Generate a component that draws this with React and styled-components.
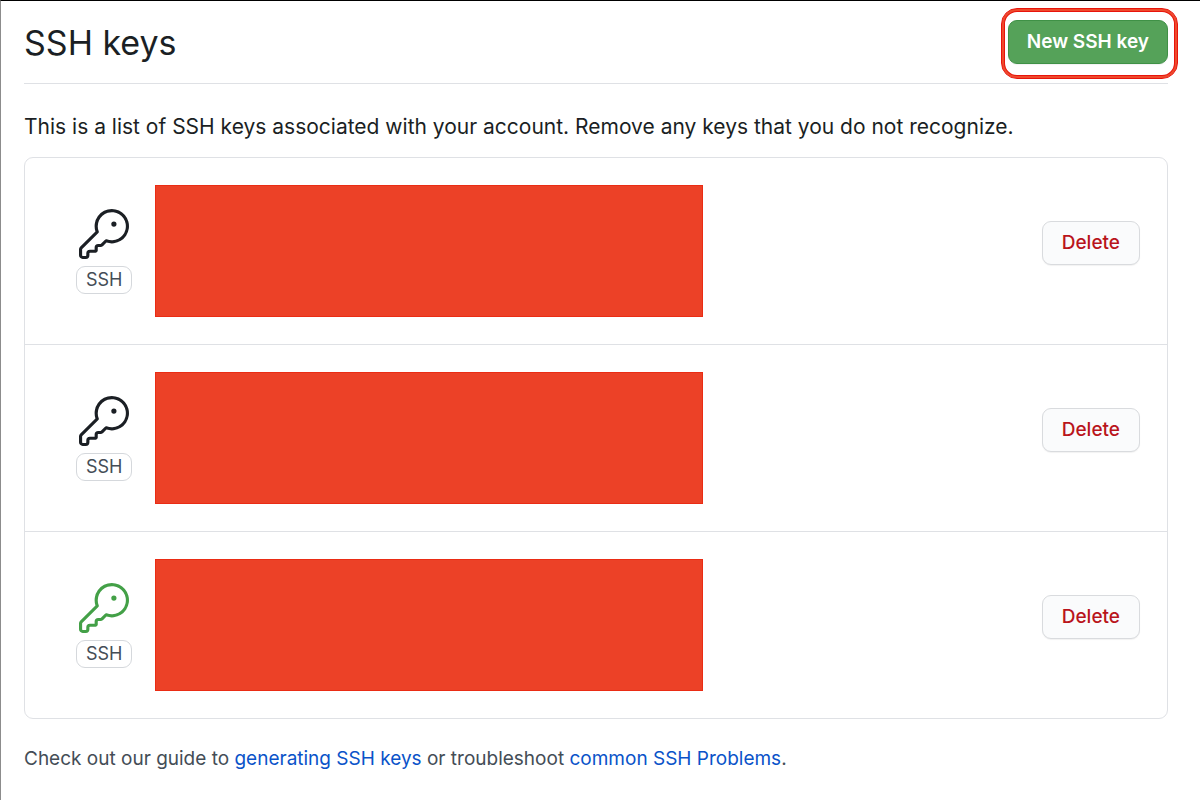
import React from "react";
import styled, { createGlobalStyle } from "styled-components";

const GlobalStyle = createGlobalStyle`
  * { box-sizing: border-box; }
  body {
    margin: 0;
    background: #fff;
    color: #1b1f24;
    font-family: Inter, "Liberation Sans", sans-serif;
  }
`;

const Page = styled.main`
  min-height: 100vh;
  padding: 19px 32px 24px 23px;
  border-top: 1px solid #000;
  border-left: 1px solid #8c8c8c;
`;

const Header = styled.header`
  display: flex;
  align-items: flex-start;
  justify-content: space-between;
  padding-bottom: 17px;
  border-bottom: 1px solid #dfe1e5;
`;

const Title = styled.h1`
  margin: 0;
  font-size: 34px;
  line-height: 46px;
  font-weight: 400;
`;

const Highlight = styled.div`
  position: relative;

  &::after {
    content: "";
    position: absolute;
    inset: -12px -10px -15px -7px;
    border: 1px solid #e8140c;
    border-radius: 16px;
    box-shadow: inset 0 0 0 2px #ee4a2c, inset 0 0 0 3px #e8140c;
    pointer-events: none;
  }
`;

const Button = styled.button`
  height: 44px;
  padding: 0 ${(p) => (p.$primary ? 18 : 19)}px;
  border: 1px solid ${(p) => (p.$primary ? "#3f9146" : "#d9dbde")};
  border-radius: 9px;
  background: ${(p) => (p.$primary ? "#55a259" : "#fafbfc")};
  color: ${(p) => (p.$primary ? "#fff" : "#b9151b")};
  box-shadow: 0 1px 1px rgba(27, 31, 36, 0.06);
  font-family: inherit;
  font-size: 19px;
  line-height: 28px;
  font-weight: ${(p) => (p.$primary ? 600 : 500)};
  white-space: nowrap;
  cursor: pointer;
`;

const Intro = styled.p`
  margin: 28px 0 15px;
  font-size: 21px;
  line-height: 30px;
`;

const KeyList = styled.ul`
  margin: 0;
  padding: 0;
  list-style: none;
  border: 1px solid #dfe1e5;
  border-radius: 9px;
`;

const KeyRow = styled.li`
  display: flex;
  align-items: flex-start;
  padding: 27px;

  & + & {
    border-top: 1px solid #dfe1e5;
  }
`;

const KeyKind = styled.div`
  display: flex;
  flex-direction: column;
  align-items: center;
  gap: 7px;
  margin: 24px 23px 0 24px;
`;

const KeySvg = styled.svg`
  display: block;
  width: 50px;
  height: 50px;
  fill: ${(p) => (p.$active ? "#43a047" : "#1b1f24")};
`;

const Badge = styled.span`
  padding: 0 9px;
  border: 1px solid #d5d8dc;
  border-radius: 9px;
  color: #444d56;
  font-size: 18px;
  line-height: 26px;
`;

const Redacted = styled.div`
  flex: 0 1 548px;
  height: 132px;
  border: 1px solid #ea2c14;
  background: #ec4127;
`;

const Actions = styled.div`
  margin: 36px 0 0 auto;
`;

const Footer = styled.p`
  margin: 26px 0 0;
  color: #444d56;
  font-size: 19px;
  line-height: 28px;
`;

const Link = styled.a`
  color: #0a53c9;
  text-decoration: none;
`;

const keys = [
  { id: 1, active: false },
  { id: 2, active: false },
  { id: 3, active: true },
];

function KeyIcon({ active }) {
  return (
    <KeySvg viewBox="0 0 24 24" $active={active} aria-hidden="true">
      <path d="M16.75 8.5a1.25 1.25 0 100-2.5 1.25 1.25 0 000 2.5z" />
      <path
        fillRule="evenodd"
        d="M15.75 0a8.25 8.25 0 00-7.851 10.79L.513 18.178A1.75 1.75 0 000 19.414v2.836C0 23.217.784 24 1.75 24h1.5A1.75 1.75 0 005 22.25v-1a.25.25 0 01.25-.25h2.735a.75.75 0 00.545-.22l.214-.213A.875.875 0 009 19.948V18.5a.25.25 0 01.25-.25h1.086c.464 0 .91-.184 1.237-.513l1.636-1.636A8.25 8.25 0 1015.75 0zM9 8.25a6.75 6.75 0 114.288 6.287.75.75 0 00-.804.168l-1.971 1.972a.25.25 0 01-.177.073H9.25A1.75 1.75 0 007.5 18.5v1H5.25a1.75 1.75 0 00-1.75 1.75v1a.25.25 0 01-.25.25h-1.5a.25.25 0 01-.25-.25v-2.836a.25.25 0 01.073-.177l7.722-7.721a.75.75 0 00.168-.804A6.73 6.73 0 019 8.25z"
      />
    </KeySvg>
  );
}

export default function App() {
  return (
    <>
      <GlobalStyle />
      <Page>
        <Header>
          <Title>SSH keys</Title>
          <Highlight>
            <Button type="button" $primary>New SSH key</Button>
          </Highlight>
        </Header>
        <Intro>
          This is a list of SSH keys associated with your account. Remove any keys that you do not recognize.
        </Intro>
        <KeyList>
          {keys.map((key) => (
            <KeyRow key={key.id}>
              <KeyKind>
                <KeyIcon active={key.active} />
                <Badge>SSH</Badge>
              </KeyKind>
              <Redacted />
              <Actions>
                <Button type="button">Delete</Button>
              </Actions>
            </KeyRow>
          ))}
        </KeyList>
        <Footer>
          Check out our guide to <Link href="#generating">generating SSH keys</Link> or troubleshoot{" "}
          <Link href="#problems">common SSH Problems</Link>.
        </Footer>
      </Page>
    </>
  );
}
